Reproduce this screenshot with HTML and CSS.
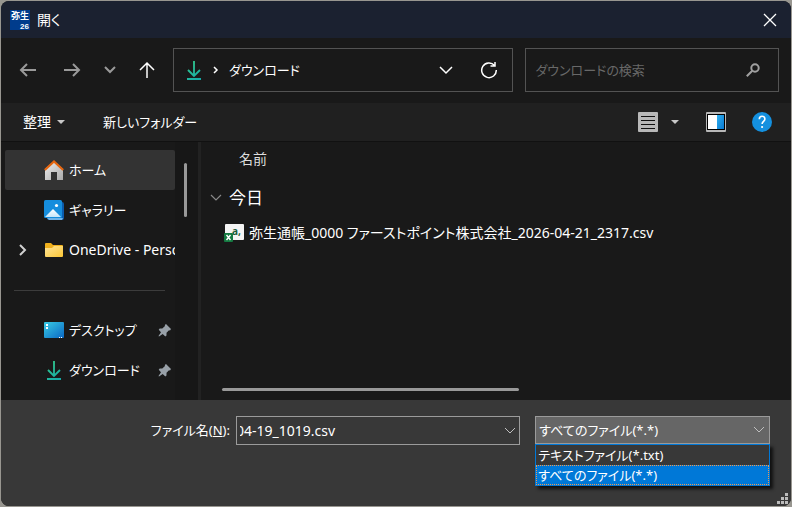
FILE: index.html
```html
<!DOCTYPE html>
<html lang="ja">
<head>
  <title>開く</title>
  <meta charset="utf-8">
  <meta name="viewport" content="width=device-width, initial-scale=1">
  <link rel="stylesheet" href="styles.css">
</head>
<body>
<div class="dialog">
  <header class="titlebar">
    <svg class="app-icon" width="20" height="20" viewBox="0 0 20 20">
      <rect width="20" height="20" fill="#003c8c"/>
      <text x="1" y="9" font-size="9">弥生</text>
      <text class="year" x="10" y="19" font-size="8">26</text>
    </svg>
    <h1>開く</h1>
    <button class="close" aria-label="閉じる">
      <svg width="14" height="14" viewBox="0 0 14 14"><path d="M1 1l12 12M13 1L1 13" stroke="#fff" stroke-width="1.3"/></svg>
    </button>
  </header>

  <div class="navbar">
    <div class="nav-buttons">
      <button class="dim" aria-label="戻る"><svg width="18" height="18" viewBox="0 0 18 18"><path d="M17 9H2M8 3L2 9l6 6"/></svg></button>
      <button class="dim" aria-label="進む"><svg width="18" height="18" viewBox="0 0 18 18"><path d="M1 9h15M10 3l6 6-6 6"/></svg></button>
      <button class="dim small" aria-label="最近表示した場所"><svg width="12" height="12" viewBox="0 0 12 12"><path d="M1 3l5 5 5-5"/></svg></button>
      <button aria-label="上へ"><svg width="18" height="18" viewBox="0 0 18 18"><path d="M9 17V2M2 9l7-7 7 7"/></svg></button>
    </div>
    <div class="address">
      <svg class="download" width="20" height="20" viewBox="0 0 20 20"><path d="M10 1v14M4 10l6 6 6-6M3 19h14"/></svg>
      <svg class="crumb" width="6" height="10" viewBox="0 0 6 10"><path d="M1 2l3 3-3 3"/></svg>
      <a href="#">ダウンロード</a>
      <button class="history" aria-label="以前の場所"><svg width="14" height="14" viewBox="0 0 14 14"><path d="M1 4l6 6 6-6"/></svg></button>
      <button class="refresh" aria-label="更新"><svg width="18" height="18" viewBox="0 0 18 18"><path d="M14.5 4.5A7.3 7.3 0 1 0 16.3 9M10.5 5H15V1"/></svg></button>
    </div>
    <div class="search">
      <input type="text" placeholder="ダウンロードの検索" aria-label="ダウンロードの検索">
      <svg width="14" height="14" viewBox="0 0 14 14"><circle cx="9" cy="5" r="3.7"/><path d="M6.3 7.7L.8 13.2"/></svg>
    </div>
  </div>

  <div class="toolbar">
    <button class="organize">整理<i class="caret"></i></button>
    <button class="new-folder">新しいフォルダー</button>
    <button class="view" aria-label="表示方法">
      <svg width="20" height="20" viewBox="0 0 20 20"><rect width="20" height="20" rx="1" fill="#b8b8b8"/><path d="M3 4.5h14M3 8.5h14M3 12.5h14M3 16.5h14" stroke="#111"/></svg>
      <i class="caret"></i>
    </button>
    <button class="preview" aria-label="プレビュー ウィンドウ">
      <svg width="20" height="20" viewBox="0 0 20 20">
        <defs><linearGradient id="pane" x2="1" y2="1"><stop stop-color="#2fb0f0"/><stop offset="1" stop-color="#0878d0"/></linearGradient></defs>
        <rect width="20" height="20" rx="1" fill="#b8b8b8"/><path d="M1 2h18v16H1z" fill="#000"/><path d="M2 3h9v14H2z" fill="#fff"/><path d="M11 3h7v14h-7z" fill="url(#pane)"/>
      </svg>
    </button>
    <button class="help" aria-label="ヘルプ">
      <svg width="20" height="20" viewBox="0 0 20 20"><circle cx="10" cy="10" r="10" fill="#1490df"/><path d="M7.3 7.2C7.3 3.2 12.9 3.4 12.9 7c0 2.3-2.8 2.4-2.8 5" fill="none" stroke="#fff" stroke-width="1.6"/><circle cx="10.1" cy="15" r="1.1" fill="#fff"/></svg>
    </button>
  </div>

  <div class="content">
    <nav class="sidebar">
      <a class="item selected" href="#">
        <svg width="20" height="20" viewBox="0 0 20 20">
          <defs><linearGradient id="wall" x2="1" y2="1"><stop stop-color="#eee"/><stop offset="1" stop-color="#aaa"/></linearGradient></defs>
          <path d="M1 9l9-8 9 8v11h-6v-8H7v8H1z" fill="url(#wall)"/><path d="M.8 10L10 1.5l9.2 8.5" fill="none" stroke="#e4650f" stroke-width="2.2"/>
        </svg>
        <span>ホーム</span>
      </a>
      <a class="item" href="#">
        <svg width="20" height="20" viewBox="0 0 20 20">
          <defs><linearGradient id="hill" x2="0" y2="1"><stop stop-color="#fff"/><stop offset="1" stop-color="#c5e5fa"/></linearGradient></defs>
          <rect x="3" y="2" width="17" height="18" rx="2" fill="#0b5cad"/><path d="M3 18h16l-1 2H5z" fill="#6fb3e8"/><rect width="18" height="18" rx="1.5" fill="#158ddd"/><path d="M1 17l8-8 8 8z" fill="url(#hill)"/><circle cx="12.5" cy="5.5" r="1.6" fill="#fff"/>
        </svg>
        <span>ギャラリー</span>
      </a>
      <a class="item" href="#">
        <svg class="expand" width="8" height="12" viewBox="0 0 8 12"><path d="M1 1l5 5-5 5"/></svg>
        <svg width="20" height="20" viewBox="0 0 20 20">
          <defs><linearGradient id="folder" x2="1" y2="1"><stop stop-color="#ffe599"/><stop offset="1" stop-color="#fcc635"/></linearGradient></defs>
          <path d="M1 4q0-1 1-1h5l2 2h9q1 0 1 1v5H1z" fill="#f0b01c"/><path d="M1 8h7l2-2h9v10q0 1-1 1H2q-1 0-1-1z" fill="url(#folder)"/>
        </svg>
        <span class="latin">OneDrive - Personal</span>
      </a>
      <hr>
      <a class="item" href="#">
        <svg width="20" height="20" viewBox="0 0 20 20">
          <defs><linearGradient id="desk" x2="1" y2="1"><stop stop-color="#38cbe5"/><stop offset="1" stop-color="#0b68c4"/></linearGradient></defs>
          <rect y="2" width="20" height="16" rx="1" fill="url(#desk)"/><path d="M2 4h2v2H2zM2 7h2v2H2zM15 17h1v1h-1zM17 17h1v1h-1z" fill="#fff"/>
        </svg>
        <span>デスクトップ</span>
        <svg class="pin" width="14" height="14" viewBox="0 0 14 14"><path d="M8 1l5 5-1 1.5-1-.2-2.5 2.5v2.7l-1.2 1L4.7 11 1 13.5.5 13 3 9.3.7 6.7l1-1.2h2.6L7 3l-.2-1z"/></svg>
      </a>
      <a class="item" href="#">
        <svg class="download" width="20" height="20" viewBox="0 0 20 20">
          <path d="M10 1v14M4 10l6 6 6-6M3 19h14"/>
        </svg>
        <span>ダウンロード</span>
        <svg class="pin" width="14" height="14" viewBox="0 0 14 14"><path d="M8 1l5 5-1 1.5-1-.2-2.5 2.5v2.7l-1.2 1L4.7 11 1 13.5.5 13 3 9.3.7 6.7l1-1.2h2.6L7 3l-.2-1z"/></svg>
      </a>
    </nav>
    <div class="scroll-track"><div class="scroll-thumb"></div></div>

    <main class="files">
      <button class="column">名前</button>
      <h2><svg width="12" height="12" viewBox="0 0 12 12"><path d="M1 3l5 5 5-5"/></svg>今日</h2>
      <a class="file" href="#">
        <svg width="20" height="20" viewBox="0 0 20 20">
          <rect x="1" y="1" width="19" height="16" rx="1" fill="#f4f4f4"/>
          <text class="csv-mark" x="8" y="12">a,</text>
          <rect y="10" width="9" height="9" rx="1" fill="#147a41"/><path d="M2.5 12l4 5M6.5 12l-4 5" stroke="#fff" stroke-width="1.4"/>
        </svg>
        <span>弥生通帳_0000 ファーストポイント株式会社_2026-04-21_2317.csv</span>
      </a>
      <div class="hscroll"></div>
    </main>
  </div>

  <footer class="footer">
    <label for="filename">ファイル名(<u>N</u>):</label>
    <div class="combo">
      <input type="text" id="filename" value="04-19_1019.csv">
      <button aria-label="ファイル名の履歴"><svg width="12" height="12" viewBox="0 0 12 12"><path d="M1 3l5 5 5-5"/></svg></button>
    </div>
    <div class="filetype">
      <select aria-label="ファイルの種類">
        <option>すべてのファイル(*.*)</option>
        <option>テキストファイル(*.txt)</option>
      </select>
      <svg width="12" height="12" viewBox="0 0 12 12"><path d="M1 3l5 5 5-5"/></svg>
      <ul class="options" role="listbox" aria-label="ファイルの種類">
        <li role="option">テキストファイル(*.txt)</li>
        <li role="option" class="active" aria-selected="true">すべてのファイル(*.*)</li>
      </ul>
    </div>
    <svg class="grip" width="11" height="11" viewBox="0 0 11 11"><path d="M8 0h3v3H8zM4 4h3v3H4zM8 4h3v3H8zM0 8h3v3H0zM4 8h3v3H4zM8 8h3v3H8z"/></svg>
  </footer>
</div>
<svg class="defs" width="0" height="0">
  <defs><linearGradient id="green" gradientUnits="userSpaceOnUse" x1="4" y1="0" x2="16" y2="20"><stop stop-color="#35d08c"/><stop offset="1" stop-color="#16a8a8"/></linearGradient></defs>
</svg>
</body>
</html>
```

FILE: styles.css
```css
* {
  box-sizing: border-box;
}
html, body {
  height: 100%;
  margin: 0;
}
body {
  padding: 1px;
  background: #989690;
  color: #fff;
  font: 14px/20px "Noto Sans", "Noto Sans CJK JP", sans-serif;
  font-feature-settings: "palt";
}
button, input, select {
  margin: 0;
  padding: 0;
  border: 0;
  outline: 0;
  background: none;
  color: inherit;
  font: inherit;
  font-feature-settings: inherit;
}
button {
  display: flex;
  align-items: center;
  justify-content: center;
}
a {
  color: inherit;
  text-decoration: none;
}
svg {
  display: block;
  flex: none;
}
.defs {
  position: absolute;
}
.dialog {
  display: flex;
  flex-direction: column;
  height: 100%;
  border-radius: 8px;
  overflow: hidden;
  background: #191919;
}

/* title bar */
.titlebar {
  display: flex;
  align-items: center;
  height: 37px;
  padding: 0 14px 0 9px;
  background: #1b2130;
}
.titlebar h1 {
  flex: 1;
  margin: 0 0 0 7px;
  font-size: 14px;
  font-weight: normal;
}
.app-icon text {
  fill: #fff;
  font-family: "Noto Sans CJK JP", sans-serif;
  font-weight: bold;
}
.app-icon .year {
  font-family: "Liberation Sans", sans-serif;
}

/* navigation */
.navbar {
  display: flex;
  align-items: center;
  height: 65px;
  padding: 0 12px 2px 18px;
  font-size: 13px;
}
.navbar svg, .files h2 svg, .footer svg, .expand {
  fill: none;
  stroke: #fff;
  stroke-width: 1.5;
}
.nav-buttons {
  display: flex;
  align-items: center;
  width: 154px;
  gap: 26px;
}
.nav-buttons .small {
  margin: 0 -4px 0 -3px;
}
.nav-buttons .dim svg {
  stroke: #9a9a9a;
  stroke-width: 2;
}
.address, .search {
  display: flex;
  align-items: center;
  height: 44px;
  border: 1px solid #535353;
}
.address {
  flex: 7;
  padding: 0 14px 0 10px;
}
.address a {
  flex: 1;
  margin-left: 10px;
}
.address .crumb {
  margin-left: 9px;
}
.refresh {
  margin-left: 27px;
}
.navbar .download, .sidebar .download {
  fill: none;
  stroke: url(#green);
  stroke-width: 1.8;
}
.search {
  flex: 5;
  margin-left: 12px;
  padding: 0 18px 0 9px;
}
.search input {
  flex: 1;
  min-width: 0;
}
.search input::placeholder {
  color: #686868;
  opacity: 1;
}
.navbar .search svg {
  stroke: #a0a0a0;
  stroke-width: 2;
}

/* toolbar */
.toolbar {
  display: flex;
  align-items: center;
  height: 38px;
  padding: 0 19px 0 22px;
  background: #202020;
}
.toolbar .new-folder {
  margin-left: 38px;
  font-size: 13px;
}
.toolbar .view {
  margin-left: auto;
}
.toolbar .preview {
  margin-left: 27px;
}
.toolbar .help {
  margin-left: 26px;
}
.caret {
  margin-left: 6px;
  border: 4px solid transparent;
  border-top-color: #c8c8c8;
  border-bottom: 0;
}
.view .caret {
  margin-left: 13px;
}

/* sidebar */
.content {
  display: flex;
  flex: 1;
  min-height: 0;
  border-top: 1px solid #111;
}
.sidebar {
  width: 174px;
  padding: 8px 0 0 4px;
  font-size: 13px;
}
.item {
  display: flex;
  align-items: center;
  height: 40px;
  padding-left: 39px;
  overflow: hidden;
  white-space: nowrap;
}
.item.selected {
  border-radius: 2px;
  background: #333;
}
.item span {
  margin-left: 5px;
}
.item .latin {
  font-size: 14px;
}
.item .expand {
  margin: 0 17px 0 -25px;
  stroke: #d0d0d0;
  stroke-width: 2;
}
.item .pin {
  margin: 0 3px 0 auto;
  fill: #98a0a8;
}
.sidebar hr {
  height: 1px;
  margin: 20px 10px 19px 9px;
  border: 0;
  background: #3c3c3c;
}
.scroll-track {
  width: 26px;
  padding: 21px 0 0 9px;
  border-right: 3px solid #222;
  background: #171717;
}
.scroll-thumb {
  width: 3px;
  height: 54px;
  border-radius: 2px;
  background: #999;
}

/* file list */
.files {
  display: flex;
  flex: 1;
  flex-direction: column;
  align-items: flex-start;
  min-width: 0;
  padding: 7px 20px 9px 9px;
}
.column {
  margin-left: 29px;
  color: #ddd;
}
.files h2 {
  display: flex;
  align-items: center;
  gap: 7px;
  margin: 16px 0 12px;
  font-size: 17px;
  font-weight: normal;
  line-height: 26px;
}
.files h2 svg {
  stroke: #888;
  stroke-width: 1.2;
}
.file {
  display: flex;
  align-items: center;
  gap: 5px;
  margin-left: 14px;
  white-space: nowrap;
}
.csv-mark {
  fill: #185c37;
  font-size: 10px;
  font-weight: bold;
}
.hscroll {
  width: 53%;
  height: 3px;
  margin: auto 0 0 12px;
  border-radius: 2px;
  background: #999;
}

/* footer */
.footer {
  position: relative;
  display: flex;
  align-items: flex-start;
  height: 106px;
  padding: 16px 21px 0 0;
  background: #383838;
  font-size: 13px;
}
.footer label {
  width: 229px;
  padding: 4px 0;
  text-align: right;
}
.combo {
  display: flex;
  flex: 19;
  height: 29px;
  margin: 0 15px 0 6px;
  padding: 0 3px;
  border: 1px solid #9b9b9b;
}
.combo input {
  flex: 1;
  min-width: 0;
  font-size: 14px;
  text-indent: -4px;
}
.footer svg {
  stroke: #c0c0c0;
  stroke-width: 1;
}
.filetype {
  position: relative;
  display: flex;
  flex: 16;
  align-items: center;
  height: 28px;
  border: 1px solid #9b9b9b;
  background: #666;
}
.filetype select {
  width: 100%;
  height: 100%;
  padding-left: 3px;
  appearance: none;
}
.filetype svg {
  position: absolute;
  right: 4px;
  pointer-events: none;
}
.options {
  position: absolute;
  top: 27px;
  left: -1px;
  right: -1px;
  margin: 0;
  padding: 0;
  border: 1px solid #0078d7;
  background: #383838;
  box-shadow: 3px 3px 3px #111;
  list-style: none;
}
.options li {
  padding-left: 2px;
}
.options .active {
  background: #0078d7;
  outline: 1px dotted #f09a50;
  outline-offset: -1px;
}
.footer .grip {
  position: absolute;
  right: 3px;
  bottom: 2px;
  fill: #bbb;
  stroke: none;
}
```
